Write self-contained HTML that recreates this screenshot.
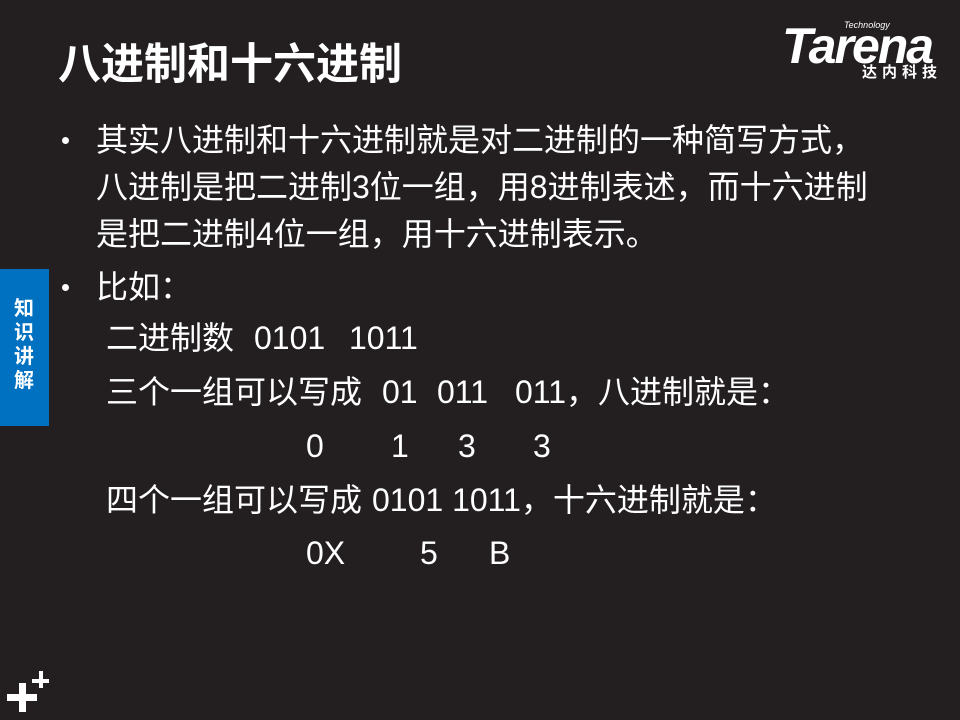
<!DOCTYPE html>
<html><head><meta charset="utf-8"><style>
html,body{margin:0;padding:0}
body{width:960px;height:720px;background:#231f20;position:relative;overflow:hidden;font-family:"Liberation Sans","Noto Sans CJK SC",sans-serif;color:#fff}
.t{position:absolute;font-family:"Liberation Sans","Noto Sans CJK SC","WenQuanYi Zen Hei",sans-serif;font-size:32px;line-height:40px;white-space:nowrap}
.b{position:absolute;width:7px;height:7px;border-radius:50%;background:#fff;left:62px}
</style></head><body>
<div class="t" style="left:58px;top:40px;font-size:43px;line-height:50px;font-weight:bold">八进制和十六进制</div>

<div style="position:absolute;left:782px;top:14px;width:170px;height:74px">
<div style="position:absolute;left:62px;top:6px;font-size:9px;font-style:italic">Technology</div>
<div style="position:absolute;left:0;top:6px;font-size:50px;font-weight:bold;font-style:italic;letter-spacing:-2px;line-height:52px">Tarena</div>
<div class="t" style="left:80px;top:48px;font-size:15px;line-height:20px;font-weight:bold;letter-spacing:5px;font-family:'Noto Sans CJK SC',sans-serif">达内科技</div>
</div>

<div style="position:absolute;left:0;top:269px;width:49px;height:157px;background:#0070c0"></div>
<div class="t" style="left:12px;top:297px;font-size:20px;line-height:24px;font-weight:bold;width:24px;white-space:normal;text-align:center">知识讲解</div>

<div class="b" style="top:137px"></div>
<div class="t" style="left:96px;top:120px">其实八进制和十六进制就是对二进制的一种简写方式，</div>
<div class="t" style="left:96px;top:167px">八进制是把二进制3位一组，用8进制表述，而十六进制</div>
<div class="t" style="left:96px;top:214px">是把二进制4位一组，用十六进制表示。</div>
<div class="b" style="top:284px"></div>
<div class="t" style="left:96px;top:267px">比如：</div>

<div class="t" style="left:106px;top:318px">二进制数</div>
<div class="t" style="left:254px;top:318px">0101</div>
<div class="t" style="left:349px;top:318px">1011</div>

<div class="t" style="left:106px;top:372px">三个一组可以写成</div>
<div class="t" style="left:382px;top:372px">01</div>
<div class="t" style="left:437px;top:372px">011</div>
<div class="t" style="left:515px;top:372px">011，八进制就是：</div>

<div class="t" style="left:306px;top:426px">0</div>
<div class="t" style="left:391px;top:426px">1</div>
<div class="t" style="left:458px;top:426px">3</div>
<div class="t" style="left:533px;top:426px">3</div>

<div class="t" style="left:106px;top:480px">四个一组可以写成</div>
<div class="t" style="left:372px;top:480px">0101 1011，十六进制就是：</div>

<div class="t" style="left:306px;top:533px">0X</div>
<div class="t" style="left:420px;top:533px">5</div>
<div class="t" style="left:489px;top:533px">B</div>

<svg style="position:absolute;left:0;top:660px" width="60" height="60">
<rect x="7" y="34" width="30" height="7" fill="#fff"/>
<rect x="19" y="23" width="7" height="29" fill="#fff"/>
<rect x="32" y="19" width="17" height="4" fill="#fff"/>
<rect x="39" y="11" width="4" height="17" fill="#fff"/>
</svg>
</body></html>
